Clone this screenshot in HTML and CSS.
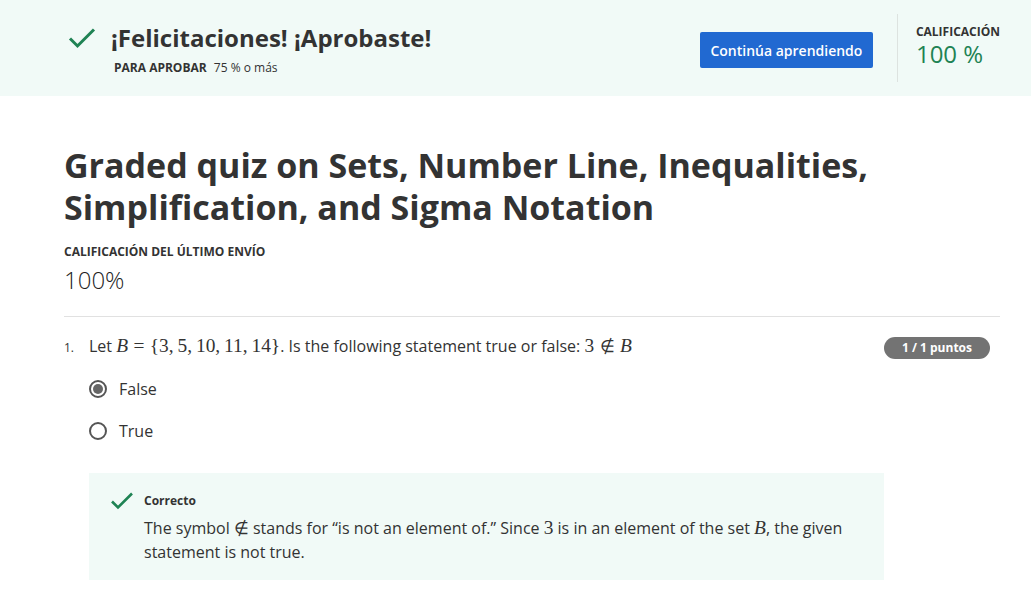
FILE: index.html
```html
<!DOCTYPE html>
<html lang="es">
<head>
<meta charset="utf-8">
<link rel="stylesheet" href="styles.css">
</head>
<body>
<header class="banner">
  <div class="banner-inner">
    <div class="pass">
      <svg class="pass-icon" width="30" height="24" viewBox="0 0 30 24"><path d="M3 12.5 L10.5 20 L27 3.5" fill="none" stroke="#1f8354" stroke-width="3"/></svg>
      <div class="pass-text">
        <h2 class="pass-title">¡Felicitaciones! ¡Aprobaste!</h2>
        <div class="pass-sub"><span class="label">PARA APROBAR</span> 75 % o más</div>
      </div>
    </div>
    <div class="banner-right">
      <button class="btn">Continúa aprendiendo</button>
      <div class="divider"></div>
      <div class="grade">
        <div class="label">CALIFICACIÓN</div>
        <div class="grade-val">100 %</div>
      </div>
    </div>
  </div>
</header>
<main class="main">
  <h1 class="title">Graded quiz on Sets, Number Line, Inequalities, Simplification, and Sigma Notation</h1>
  <div class="label last">CALIFICACIÓN DEL ÚLTIMO ENVÍO</div>
  <div class="score">100%</div>
  <hr class="sep">
  <section class="question">
    <div class="q-head">
      <span class="q-num">1.</span>
      <p class="q-text">Let <span class="m i">B</span><span class="m rel">=</span><span class="m">{3,&thinsp;5,&thinsp;10,&thinsp;11,&thinsp;14}</span>. Is the following statement true or false: <span class="m">3</span><span class="m rel sym">∉</span><span class="m i">B</span></p>
      <span class="badge">1 / 1 puntos</span>
    </div>
    <div class="options">
      <label class="opt"><span class="radio checked"></span>False</label>
      <label class="opt"><span class="radio"></span>True</label>
    </div>
    <div class="feedback">
      <svg class="fb-icon" width="24" height="18" viewBox="0 0 24 18"><path d="M2 9.5 L8 15.5 L22 1.5" fill="none" stroke="#1f8354" stroke-width="2.6"/></svg>
      <div class="fb-body">
        <div class="fb-title">Correcto</div>
        <p class="fb-text">The symbol <span class="m sym">∉</span> stands for “is not an element of.” Since <span class="m">3</span> is in an element of the set <span class="m i">B</span>, the given statement is not true.</p>
      </div>
    </div>
  </section>
</main>
</body>
</html>
```
FILE: styles.css
```css
* { box-sizing: border-box; }
body {
  margin: 0;
  font-family: "Open Sans", "Noto Sans", sans-serif;
  color: #1f1f1f;
  background: #fff;
}
.banner {
  background: #f1faf7;
  height: 96px;
}
.banner-inner {
  display: flex;
  justify-content: space-between;
  align-items: stretch;
  padding: 14px 31px 0 64px;
  height: 96px;
}
.pass {
  display: flex;
  align-items: flex-start;
  padding-top: 10px;
}
.pass-icon { margin: 2px 14px 0 3px; }
.pass-title {
  margin: 0;
  font-size: 24px;
  line-height: 28px;
  font-weight: 700;
  color: #333;
}
.pass-sub {
  margin-top: 8px;
  padding-left: 3px;
  font-size: 12px;
  line-height: 16px;
  color: #333;
}
.label {
  font-size: 12px;
  font-weight: 700;
  text-transform: uppercase;
  color: #333;
  margin-right: 4px;
}
.banner-right {
  display: flex;
  align-items: flex-start;
  height: 68px;
}
.btn {
  margin-top: 18px;
  width: 173px;
  height: 36px;
  background: #2169d1;
  color: #fff;
  border: none;
  border-radius: 2px;
  font-family: "Open Sans", sans-serif;
  font-size: 14px;
  font-weight: 600;
}
.divider {
  width: 1px;
  height: 68px;
  background: #dde3e0;
  margin: 0 18px 0 24px;
}
.grade { padding-top: 10px; }
.grade .label { display: block; line-height: 16px; margin-right: 0; }
.grade-val {
  font-size: 24px;
  line-height: 28px;
  color: #1f8354;
}
.main {
  padding: 0 31px 0 64px;
}
.title {
  margin: 48px 0 0;
  font-size: 34px;
  line-height: 42px;
  font-weight: 700;
  color: #333;
}
.last {
  margin-top: 16px;
  display: block;
  line-height: 16px;
}
.score {
  margin-top: 6px;
  font-size: 24px;
  font-weight: 300;
  line-height: 28px;
  color: #1f1f1f;
}
.sep {
  margin: 22px 0 0;
  border: none;
  border-top: 1px solid #e1e1e1;
}
.q-head {
  display: flex;
  align-items: baseline;
  margin-top: 17px;
}
.q-num {
  font-size: 12px;
  width: 25px;
  color: #333;
}
.q-text {
  margin: 0;
  flex: 1;
  font-size: 16px;
  line-height: 24px;
  color: #333;
}
.m {
  font-family: "Liberation Serif", "DejaVu Serif", serif;
  font-size: 19.4px;
  line-height: 1;
}
.sym {
  font-family: "DejaVu Sans", sans-serif;
  font-weight: 200;
  font-size: 17px;
}
.rel { margin: 0 5.4px; }
.i { font-style: italic; }
.badge {
  background: #737373;
  color: #fff;
  font-size: 12px;
  font-weight: 700;
  border-radius: 12px;
  padding: 3px 18px;
  line-height: 16px;
  margin-right: 10px;
}
.options {
  padding-left: 25px;
  margin-top: 18px;
  display: flex;
  flex-direction: column;
  gap: 18px;
}
.opt {
  display: flex;
  align-items: center;
  gap: 12px;
  font-size: 16px;
  line-height: 24px;
  color: #333;
}
.radio {
  width: 18px;
  height: 18px;
  border: 2px solid #555;
  border-radius: 50%;
  position: relative;
}
.radio.checked::after {
  content: "";
  position: absolute;
  left: 2px; top: 2px;
  width: 10px; height: 10px;
  border-radius: 50%;
  background: #666;
}
.feedback {
  margin: 30px 116px 0 25px;
  background: #f1faf7;
  display: flex;
  padding: 19px 20px 16px 21px;
}
.fb-icon { margin: 0 10px 0 0; flex: none; }
.fb-title {
  font-size: 12px;
  font-weight: 700;
  line-height: 18px;
  color: #333;
}
.fb-text {
  margin: 6px 0 0;
  font-size: 16px;
  line-height: 24px;
  color: #333;
}
```
